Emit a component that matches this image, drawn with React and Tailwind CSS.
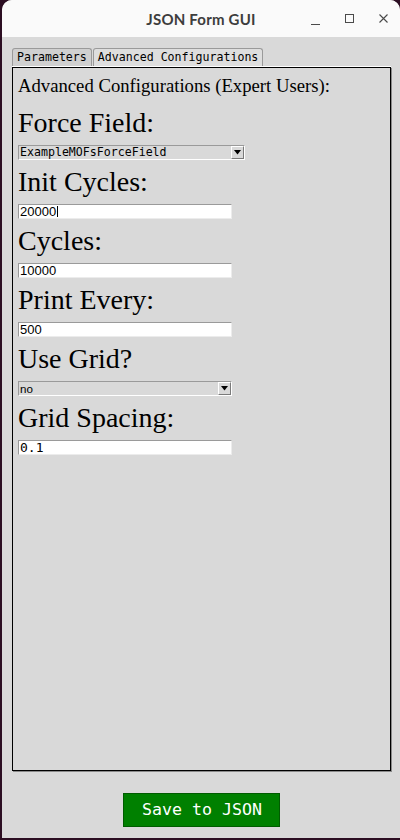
import React from "react";

// ===== Small widgets =====
const serif = "font-['Liberation_Serif',serif]";
const mono = "font-['DejaVu_Sans_Mono',monospace]";
const sans = "font-['Liberation_Sans',sans-serif]";

const Label = ({ children }) => (
    <div className={`${serif} text-[28px] leading-[31px] h-[31px] text-black whitespace-nowrap`}>
        {children}
    </div>
);

const TextInput = ({ value, font = sans, caret = false }) => (
    <div className="mt-[7px] w-[214px] h-[15px] bg-white border-t border-l border-t-[#9a9a9a] border-l-[#9a9a9a] border-b border-r border-b-[#ececec] border-r-[#ececec] flex items-center pl-[1px]">
        <span className={`${font} text-[13px] leading-[13px] text-black`}>{value}</span>
        {caret && <span className="w-px h-[11px] bg-black ml-[1px]" />}
    </div>
);

const Dropdown = ({ value, width, font }) => (
    <div
        className="mt-[7px] h-[15px] bg-[#d9d9d9] border-t border-l border-t-[#9a9a9a] border-l-[#9a9a9a] border-b border-r border-b-white border-r-white flex items-center justify-between"
        style={{ width }}
    >
        <span className={`${font} pl-[1px] text-[11.6px] leading-[13px] text-black`}>{value}</span>
        <span className="w-[13px] h-[13px] bg-[#d9d9d9] border-t border-l border-t-white border-l-white border-b border-r border-b-[#7a7a7a] border-r-[#7a7a7a] flex items-center justify-center">
            <svg width="7" height="5" viewBox="0 0 7 5">
                <polygon points="0,0 7,0 3.5,4.5" fill="#000" />
            </svg>
        </span>
    </div>
);

const Group = ({ children }) => <div className="mt-[6px] flex flex-col">{children}</div>;

// ===== App =====
const App = () => {
    return (
        <div className="w-[400px] h-[840px] bg-[#2c0e22] pl-[2px] pb-[2px]">
            <div className="h-full flex flex-col bg-[#d9d9d9] rounded-t-[10px] overflow-hidden">
                {/* Title bar */}
                <header className="relative h-[37px] bg-[#fafafa] flex items-center justify-center shrink-0">
                    <h1 className="font-['Lato',sans-serif] font-bold text-[15px] text-[#3d3d3d] mt-[2px] tracking-[0.2px]">
                        JSON Form GUI
                    </h1>
                    <div className="absolute right-[12px] top-0 h-full flex items-center gap-[25px] text-[#4a4a4a]">
                        <svg width="9" height="9" viewBox="0 0 9 9" className="mt-[5px]">
                            <line x1="0" y1="7.5" x2="9" y2="7.5" stroke="currentColor" strokeWidth="1" />
                        </svg>
                        <svg width="9" height="9" viewBox="0 0 9 9">
                            <rect x="0.5" y="0.5" width="8" height="8" fill="none" stroke="currentColor" strokeWidth="1" />
                        </svg>
                        <svg width="9" height="9" viewBox="0 0 9 9">
                            <path d="M0.5 0.5 L8.5 8.5 M8.5 0.5 L0.5 8.5" stroke="currentColor" strokeWidth="1.1" />
                        </svg>
                    </div>
                </header>

                {/* Body */}
                <main className="flex-1 flex flex-col pl-[9px] pr-[8px] pt-[11px]">
                    {/* Tabs */}
                    <div className="flex items-end h-[18px] pl-[1px]">
                        <div className={`${mono} h-[18px] px-[4px] bg-[#d0d0d0] border border-b-0 border-[#9a9a9a] rounded-t-[3px] text-[11.6px] leading-[17px] text-black`}>
                            Parameters
                        </div>
                        <div className={`${mono} h-[18px] ml-[1px] px-[4px] bg-[#dedede] border border-b-0 border-[#9a9a9a] rounded-t-[3px] text-[11.6px] leading-[17px] text-black`}>
                            Advanced Configurations
                        </div>
                    </div>

                    {/* Frame */}
                    <section className="mt-[1px] ml-[1px] w-[379px] h-[704px] border border-black shadow-[1px_1px_0_#8a8a8a,0_-1px_0_#ffffff] pt-[7px] pl-[5px] flex flex-col">
                        <div className={`${serif} text-[18.7px] leading-[22px] h-[22px] text-black whitespace-nowrap mb-[4px]`}>
                            Advanced Configurations (Expert Users):
                        </div>

                        <Group>
                            <Label>Force Field:</Label>
                            <Dropdown value="ExampleMOFsForceField" width="227px" font={mono} />
                        </Group>
                        <Group>
                            <Label>Init Cycles:</Label>
                            <TextInput value="20000" caret />
                        </Group>
                        <Group>
                            <Label>Cycles:</Label>
                            <TextInput value="10000" />
                        </Group>
                        <Group>
                            <Label>Print Every:</Label>
                            <TextInput value="500" />
                        </Group>
                        <Group>
                            <Label>Use Grid?</Label>
                            <Dropdown value="no" width="214px" font={sans} />
                        </Group>
                        <Group>
                            <Label>Grid Spacing:</Label>
                            <TextInput value="0.1" font={mono} />
                        </Group>
                    </section>

                    {/* Save button */}
                    <div className="flex justify-center mt-[22px]">
                        <button className={`${mono} w-[157px] h-[34px] bg-[#008000] border border-[#005c00] text-white text-[16.6px] font-normal pl-[1px]`}>
                            Save to JSON
                        </button>
                    </div>
                </main>
            </div>
        </div>
    );
};

export default App;
